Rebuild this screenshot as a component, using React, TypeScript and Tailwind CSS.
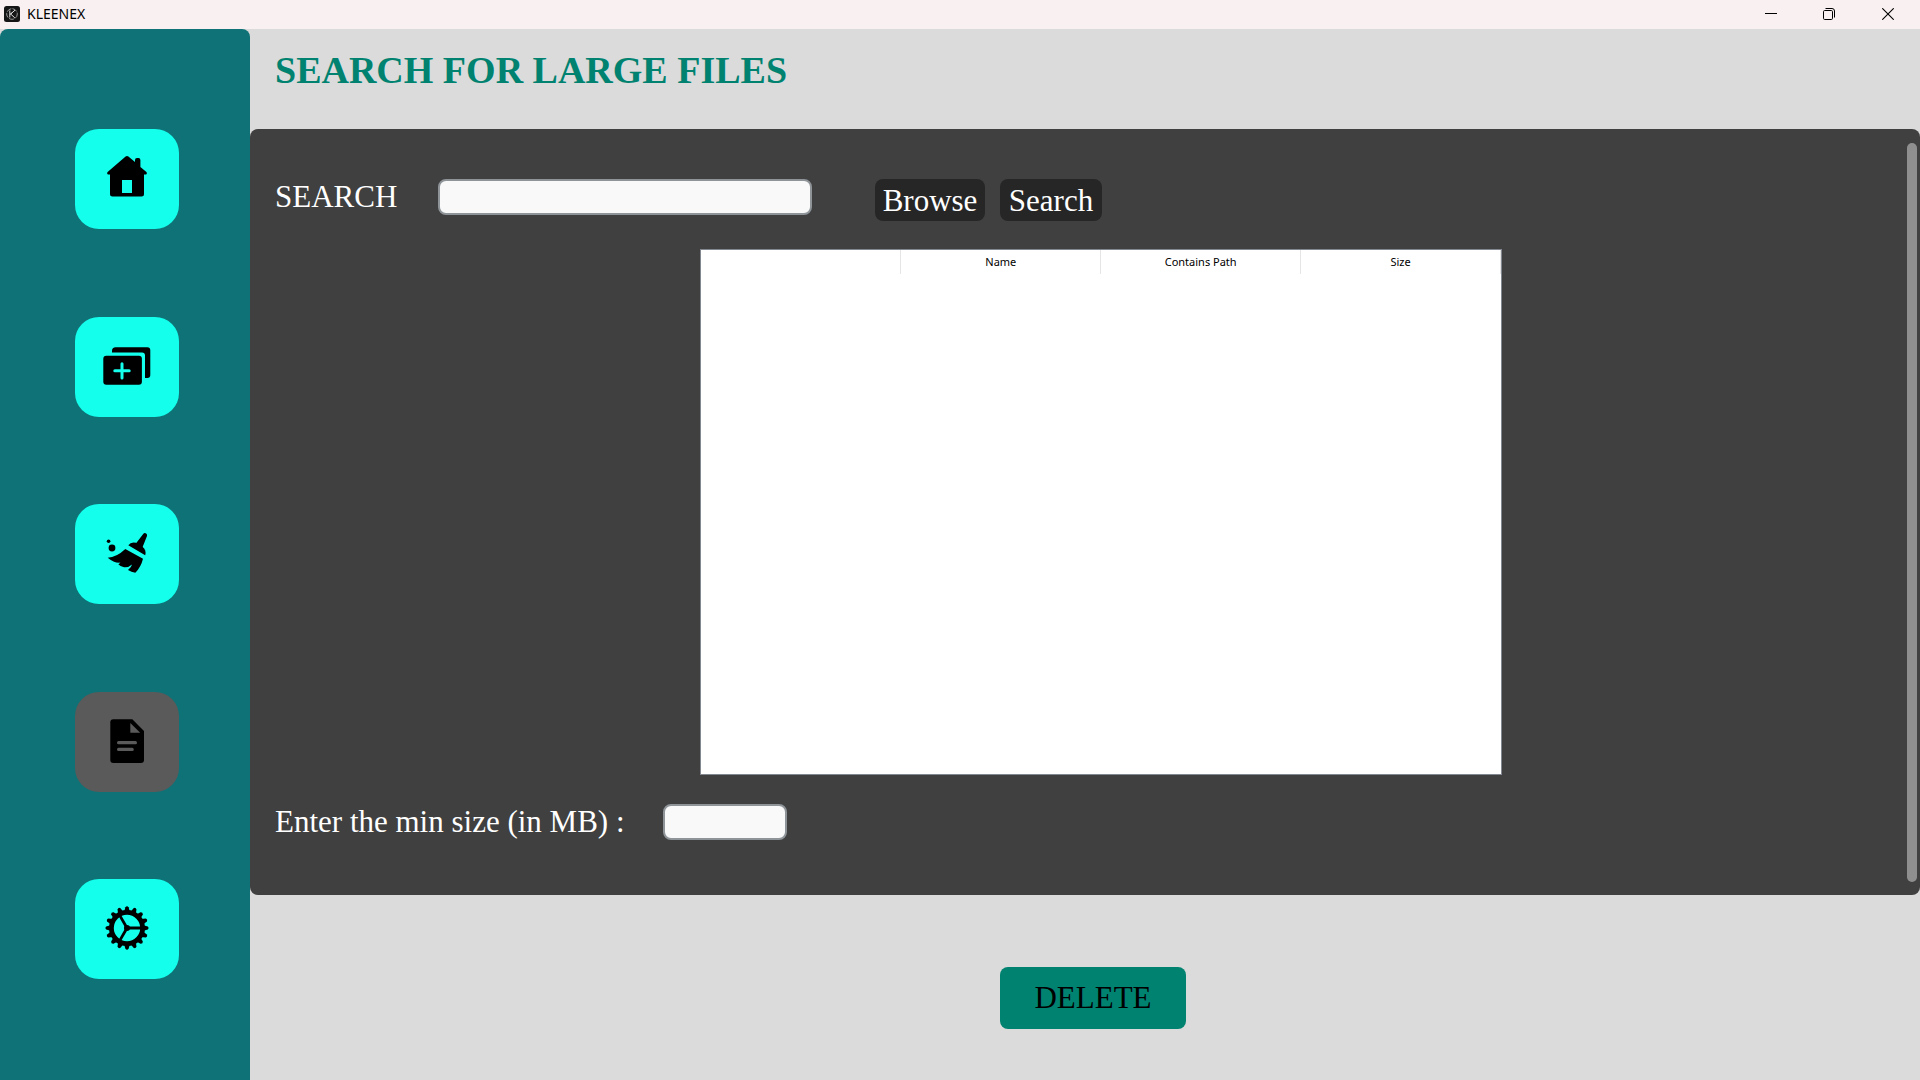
import type { ReactNode } from "react";

const GEAR_TEETH = Array.from({ length: 16 }, (_, i) => i * 22.5);

function Icon({ children }: { children: ReactNode }) {
  return (
    <svg viewBox="0 0 104 100" className="block h-full w-full" aria-hidden="true">
      {children}
    </svg>
  );
}

function HomeIcon() {
  return (
    <Icon>
      <path
        fillRule="evenodd"
        d="M50.6 27.6Q52 26.4 53.4 27.6L60 33V31Q60 29 62 29H63.4Q65.4 29 65.4 31V38L71.4 43Q72.6 44.4 71.2 45.4H69V65Q69 67.5 66.5 67.5H37.5Q35 67.5 35 65V45.4H32.8Q31.4 44.4 32.6 43ZM47 51V64H57V51Z"
      />
    </Icon>
  );
}

function AddFolderIcon() {
  return (
    <Icon>
      <rect x="28.3" y="38.7" width="38.6" height="29" rx="3" />
      <path d="M37 35.4V34Q37 30.3 40.7 30.3H72.3Q75.3 30.3 75.3 33.3V58Q75.3 61 72.3 61H70V38.5Q70 35.4 67 35.4Z" />
      <path d="M47 46.7V61M39.8 53.8H54.2" stroke="#14ffec" strokeWidth="3" strokeLinecap="round" />
    </Icon>
  );
}

function BroomIcon() {
  return (
    <Icon>
      <path d="M68.2 30Q69.4 28.4 71.2 29.4Q72.6 30.4 71.9 32.2L67.4 43.5L60.5 40Z" />
      <path d="M53.3 41.2Q56 37.4 61 38.8L67.5 42.8Q71.6 46 70.2 51.2Z" />
      <path d="M50.3 45L68 54.7Q66 63 60.3 68.8Q56.4 68.2 53 66Q56.4 63.4 57 60.4Q53 64 48.3 63Q45.4 62.4 43.4 60.6L45.4 58.6Q42 59 39 57.7Q35.4 56 32.7 53.7Q41.5 53.4 50.3 45Z" />
      <circle cx="37" cy="44" r="3.4" />
      <circle cx="33.6" cy="37.3" r="1.8" />
    </Icon>
  );
}

function DocumentIcon() {
  return (
    <Icon>
      <path d="M38.3 27.3H57.3L69 39V68Q69 71 66 71H38.3Q35.3 71 35.3 68V30.3Q35.3 27.3 38.3 27.3Z" />
      <path d="M55.3 31V40.7H65.2Z" fill="#5a5a5a" />
      <path d="M43.6 50.7H60.4M43.6 57.4H57.2" stroke="#5a5a5a" strokeWidth="3.2" strokeLinecap="round" />
    </Icon>
  );
}

function GearIcon() {
  return (
    <Icon>
      <circle cx="52" cy="49" r="15.6" fill="none" stroke="#000" strokeWidth="4.8" />
      {GEAR_TEETH.map((a) => (
        <path key={a} d="M49.2 32.5L50.4 28.2Q52 26.4 53.6 28.2L54.8 32.5Z" transform={`rotate(${a} 52 49)`} />
      ))}
      <path d="M52 49H66M52 49L45 36.9M52 49L45 61.1" stroke="#000" strokeWidth="2.8" />
      <circle cx="52" cy="49" r="3" />
    </Icon>
  );
}

const NAV = [
  { label: "Home", icon: <HomeIcon />, active: false },
  { label: "Duplicates", icon: <AddFolderIcon />, active: false },
  { label: "Clean", icon: <BroomIcon />, active: false },
  { label: "Large files", icon: <DocumentIcon />, active: true },
  { label: "Settings", icon: <GearIcon />, active: false },
];

const COLUMNS = ["", "Name", "Contains Path", "Size"];

function TitleBar() {
  return (
    <header className="flex h-[29px] shrink-0 items-center justify-between bg-[#f9f0f1] pb-px pl-1 font-['Noto_Sans',sans-serif]">
      <div className="flex items-center gap-[7px]">
        <svg viewBox="0 0 16 16" className="h-4 w-4" aria-hidden="true">
          <rect width="16" height="16" rx="2.5" fill="#151515" />
          <circle cx="8" cy="8" r="5.3" fill="none" stroke="#bbb" strokeWidth="0.8" strokeDasharray="5 1.2" />
          <path d="M5.8 4.5V11.5M11 4.2L6.6 8L10.8 11.8M8.6 6.4L5.8 8.6" fill="none" stroke="#ddd" strokeWidth="1" />
        </svg>
        <span className="text-[14px] leading-4 text-black">KLEENEX</span>
      </div>
      <div className="flex h-full">
        <button aria-label="Minimize" className="flex w-[62px] items-center justify-center">
          <svg viewBox="0 0 12 12" className="h-3 w-3"><path d="M0 5.5H12" stroke="#000" /></svg>
        </button>
        <button aria-label="Restore" className="flex w-[54px] items-center justify-center">
          <svg viewBox="0 0 12 12" className="h-3 w-3" fill="none" stroke="#000">
            <rect x="0.5" y="2.5" width="9" height="9" rx="1.2" />
            <path d="M2.5 0.5H9Q11.5 0.5 11.5 3V9.5" />
          </svg>
        </button>
        <button aria-label="Close" className="flex w-16 items-center justify-center">
          <svg viewBox="0 0 12 12" className="h-3 w-3"><path d="M0.3 0.3L11.7 11.7M11.7 0.3L0.3 11.7" stroke="#000" strokeWidth="1.1" /></svg>
        </button>
      </div>
    </header>
  );
}

export default function App() {
  return (
    <div className="flex min-h-screen flex-col bg-[#dbdbdb] font-['Liberation_Serif',serif]">
      <TitleBar />
      <div className="flex flex-1">
        <nav className="flex w-[250px] shrink-0 flex-col justify-between rounded-t-lg bg-[#0e7276] pt-[100px] pb-[101px] pl-[75px]">
          {NAV.map((item) => (
            <button
              key={item.label}
              aria-label={item.label}
              className={
                item.active
                  ? "h-[100px] w-[104px] rounded-3xl bg-[#5a5a5a]"
                  : "h-[100px] w-[104px] rounded-3xl bg-[#14ffec]"
              }
            >
              {item.icon}
            </button>
          ))}
        </nav>

        <main className="flex min-w-0 flex-1 flex-col">
          <h1 className="h-[100px] pt-5 pl-[25px] text-[38px] leading-[42px] font-bold text-[#008270]">
            SEARCH FOR LARGE FILES
          </h1>

          <section className="flex flex-1 rounded-lg bg-[#404040] text-[31px] leading-9 text-white">
            <div className="flex min-w-0 flex-1 flex-col pt-[50px] pb-[55px] pl-[25px]">
              <div className="flex items-start">
                <label htmlFor="path" className="w-[163px]">SEARCH</label>
                <input
                  id="path"
                  type="text"
                  className="h-9 w-[374px] rounded-lg border-2 border-[#8f9499] bg-[#f9f9f9] px-2 text-base text-black"
                />
                <div className="ml-[63px] flex gap-[15px]">
                  <button className="h-[42px] w-[110px] rounded-lg bg-[#262626] pt-0.5">Browse</button>
                  <button className="h-[42px] w-[102px] rounded-lg bg-[#262626] pt-0.5">Search</button>
                </div>
              </div>

              <div className="mt-7 ml-[425px] w-full max-w-[802px] flex-1 border border-[#828790] bg-white">
                <table className="w-full table-fixed border-collapse font-['Noto_Sans',sans-serif] text-[11px] leading-6 text-black">
                  <thead>
                    <tr>
                      {COLUMNS.map((c) => (
                        <th key={c} className="h-6 border-r border-[#e5e5e5] p-0 text-center font-normal">{c}</th>
                      ))}
                    </tr>
                  </thead>
                </table>
              </div>

              <div className="mt-[29px] flex items-start">
                <label htmlFor="min-size" className="w-[388px]">Enter the min size (in MB) :</label>
                <input
                  id="min-size"
                  type="text"
                  className="h-9 w-[124px] rounded-lg border-2 border-[#8f9499] bg-[#f9f9f9] px-2 text-base text-black"
                />
              </div>
            </div>
            <div className="mt-[14px] mr-[3px] mb-[13px] w-[10px] rounded-full bg-[#8f8f8f]" />
          </section>

          <div className="pt-[72px] pb-[51px] pl-[750px]">
            <button className="h-[62px] w-[186px] rounded-lg bg-[#008270] text-[31px] text-black">DELETE</button>
          </div>
        </main>
      </div>
    </div>
  );
}
